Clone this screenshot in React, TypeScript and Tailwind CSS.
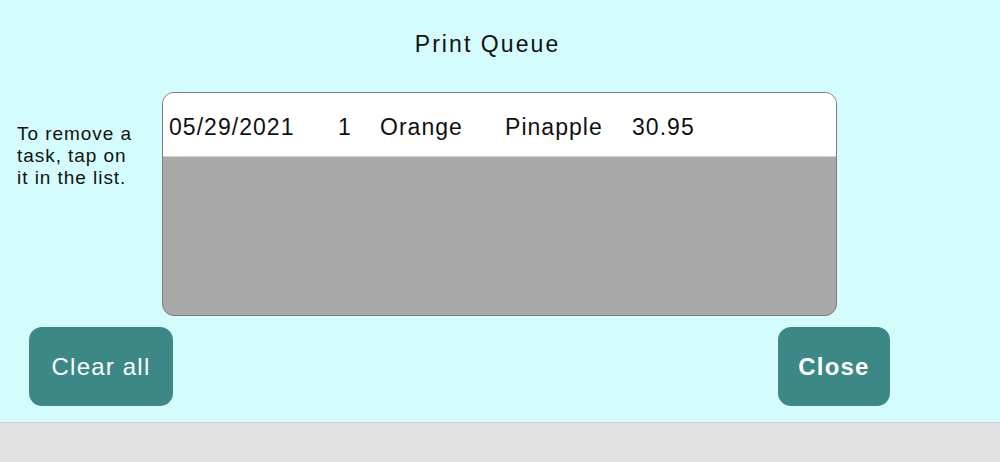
// Print Queue screen — header, task list box, and bottom buttons

const rows = [
  { date: "05/29/2021", qty: "1", color: "Orange", flavor: "Pinapple", price: "30.95" },
];

export default function App() {
  return (
    <div
      className="w-[1000px] h-[462px] flex flex-col bg-[#d5fcfc] text-[#111]"
      style={{ fontFamily: '"Liberation Sans", Arial, sans-serif' }}
    >
      <div className="h-[422px] flex flex-col">
        {/* Title */}
        <div className="h-[92px] pt-[31px] flex justify-center pr-[25px]">
          <h1 className="text-[23px] leading-[26px] tracking-[0.09em]">Print Queue</h1>
        </div>

        {/* Hint + list */}
        <div className="flex">
          <div className="w-[162px] pl-[17px] pt-[31px]">
            <p className="w-[126px] text-[19px] leading-[22px] tracking-[0.05em]">
              To remove a task, tap on it in the list.
            </p>
          </div>
          <div className="w-[675px] h-[224px] rounded-[12px] border border-[#7d7d7d] bg-[#a9a9a9] overflow-hidden">
            {rows.map((r, i) => (
              <div
                key={i}
                className="h-[64px] bg-white border-b border-[#d0d0d0] flex items-center pl-[6px] pt-[5px] text-[23px] tracking-[0.045em]"
              >
                <span className="w-[169px]">{r.date}</span>
                <span className="w-[42px]">{r.qty}</span>
                <span className="w-[125px]">{r.color}</span>
                <span className="w-[127px]">{r.flavor}</span>
                <span>{r.price}</span>
              </div>
            ))}
          </div>
        </div>

        {/* Buttons */}
        <div className="flex mt-[11px]">
          <button className="ml-[29px] w-[144px] h-[79px] rounded-[13px] bg-[#3b8886] text-white text-[24px] tracking-[0.05em]">
            Clear all
          </button>
          <button className="ml-[605px] w-[112px] h-[79px] rounded-[13px] bg-[#3b8886] text-white text-[24px] font-bold tracking-[0.05em]">
            Close
          </button>
        </div>
      </div>

      {/* Bottom bar */}
      <div className="h-[40px] bg-[#e2e2e2] border-t border-[#c3d6d6]" />
    </div>
  );
}
